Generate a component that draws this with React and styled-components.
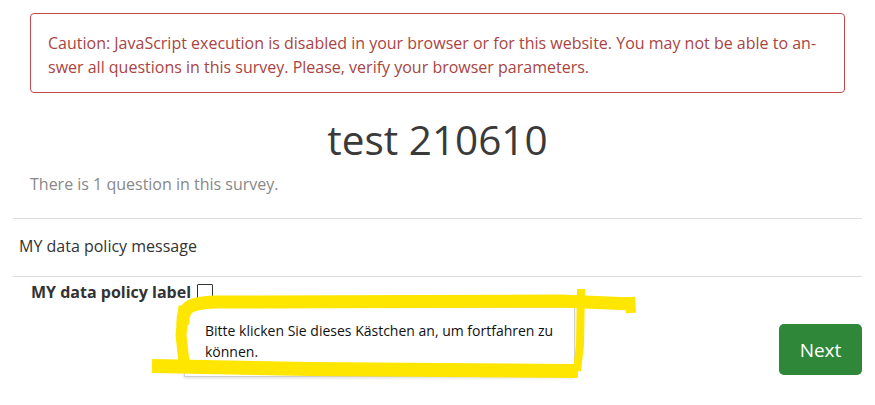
import React from 'react';
import styled, { createGlobalStyle } from 'styled-components';

const GlobalStyle = createGlobalStyle`
  body {
    margin: 0;
    background: #fff;
    font-family: "Open Sans", "Liberation Sans", sans-serif;
    color: #333;
  }
`;

const Page = styled.div`
  position: relative;
  padding: 13px 13px 0;
  height: 392px;
  overflow: hidden;
`;

const Alert = styled.div`
  margin: 0 17px;
  border: 1px solid #c24a4a;
  border-radius: 4px;
  padding: 17px 17px 13px;
  color: #a94442;
  font-size: 16px;
  line-height: 24px;
`;

const Title = styled.h1`
  margin: 23px 0 0;
  text-align: center;
  font-size: 40.5px;
  font-weight: 400;
  line-height: 48px;
  color: #3a3a3a;
`;

const Subtitle = styled.p`
  margin: 9px 0 0;
  padding-left: 17px;
  font-size: 16px;
  line-height: 22px;
  color: #888;
`;

const Divider = styled.hr`
  margin: ${(p) => p.$top}px 0 0;
  border: 0;
  border-top: 1px solid #ddd;
`;

const Message = styled.p`
  margin: 15px 0 18px;
  padding-left: 6px;
  font-size: 16px;
  line-height: 24px;
  color: #333;
`;

const QuestionRow = styled.div`
  position: relative;
  display: flex;
  align-items: center;
  gap: 6px;
  padding: 3px 0 0 18px;
`;

const Label = styled.span`
  font-weight: 700;
  font-size: 16px;
  line-height: 24px;
  color: #333;
`;

const Checkbox = styled.span`
  display: inline-block;
  width: 14px;
  height: 14px;
  border: 1px solid #333;
  border-radius: 1px;
`;

const Tooltip = styled.div`
  position: absolute;
  left: 171px;
  top: 30px;
  width: 349px;
  padding: 12px 20px 14px;
  background: #fff;
  border: 1px solid #cfcfcf;
  box-shadow: 0 1px 3px rgba(0, 0, 0, 0.15);
  font-family: "Open Sans", "Noto Sans", sans-serif;
  font-size: 14px;
  line-height: 21px;
  color: #111;
  z-index: 1;

  &::before {
    content: '';
    position: absolute;
    left: 13px;
    top: -9px;
    width: 14px;
    height: 14px;
    background: #fff;
    border-left: 1px solid #cfcfcf;
    border-top: 1px solid #cfcfcf;
    transform: rotate(45deg);
    transform-origin: center;
  }
`;

const Footer = styled.div`
  display: flex;
  justify-content: flex-end;
  margin-top: 20px;
`;

const NextButton = styled.button`
  width: 83px;
  height: 51px;
  border: 0;
  border-radius: 5px;
  background: #2f873a;
  color: #fff;
  font-family: "Open Sans", sans-serif;
  font-size: 19px;
  cursor: pointer;
`;

const Scribble = styled.svg`
  position: absolute;
  left: 0;
  top: 0;
  width: 875px;
  height: 405px;
  pointer-events: none;
  z-index: 2;
`;

const Highlight = () => (
  <Scribble viewBox="0 0 875 405">
    <g fill="none" stroke="#ffe600" strokeLinecap="butt" strokeLinejoin="round">
      <path d="M183 325 C182 308 188 303 215 302 L560 301 L633 304" strokeWidth="13" />
      <path d="M630 297 L631 313" strokeWidth="10" />
      <path d="M184 306 L181 335 L185 372" strokeWidth="11" />
      <path d="M152 366 L310 369 L578 371" strokeWidth="14" />
      <path d="M581 289 L580 345 L577 371" strokeWidth="8" />
    </g>
  </Scribble>
);

export default function App() {
  return (
    <>
      <GlobalStyle />
      <Page>
        <Alert>
          Caution: JavaScript execution is disabled in your browser or for this website. You may not be able to an-
          <br />
          swer all questions in this survey. Please, verify your browser parameters.
        </Alert>
        <Title>test 210610</Title>
        <Subtitle>There is 1 question in this survey.</Subtitle>
        <Divider $top={23} />
        <Message>MY data policy message</Message>
        <Divider $top={0} />
        <QuestionRow>
          <Label>MY data policy label</Label>
          <Checkbox />
          <Tooltip>Bitte klicken Sie dieses Kästchen an, um fortfahren zu können.</Tooltip>
        </QuestionRow>
        <Footer>
          <NextButton>Next</NextButton>
        </Footer>
        <Highlight />
      </Page>
    </>
  );
}
